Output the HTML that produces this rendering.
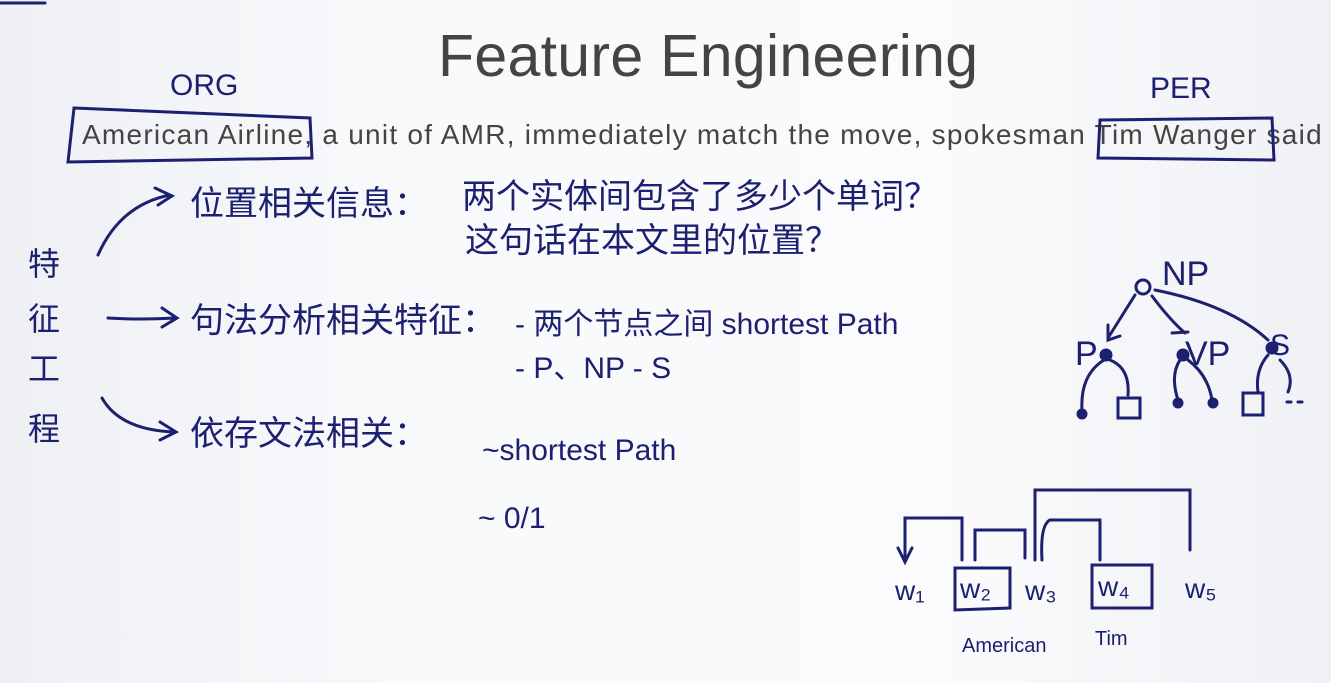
<!DOCTYPE html>
<html><head><meta charset="utf-8"><style>
html,body{margin:0;padding:0}
body{width:1331px;height:683px;overflow:hidden;background:linear-gradient(90deg,#eef0f4 0%,#f8f9fb 30%,#fbfbfd 70%,#f0f1f5 100%);position:relative;font-family:"Liberation Sans",sans-serif}
.t{position:absolute;color:#444;white-space:nowrap}
svg{position:absolute;left:0;top:0}
svg text{font-family:"Liberation Sans","Noto Sans CJK SC",sans-serif;fill:#1c2070}
</style></head><body>
<div class="t" style="left:438px;top:22px;font-size:59px;letter-spacing:0.3px">Feature Engineering</div>
<div class="t" style="left:82px;top:119px;font-size:28px;letter-spacing:1.25px">American Airline, a unit of AMR, immediately match the move, spokesman Tim Wanger said</div>
<svg width="1331" height="683" fill="none" stroke="#1c2070" stroke-width="3" stroke-linecap="round">
<path d="M0 3h45"/>
<path d="M74 108 L310 118 L312 158 L68 162 Z"/>
<path d="M1100 120 L1272 118 L1274 160 L1098 158 Z"/>
<text x="170" y="95" font-size="30" stroke="none">ORG</text>
<text x="1150" y="98" font-size="30" stroke="none">PER</text>
<path d="M98 255 Q120 205 170 195 M155 188 L172 196 L158 205"/>
<path d="M108 318 Q140 320 175 318 M162 308 L177 318 L162 327"/>
<path d="M102 398 Q120 430 175 432 M160 422 L176 432 L160 440"/>
<g stroke="none" font-size="34">
<text x="190" y="215">位置相关信息：</text>
<text x="462" y="208">两个实体间包含了多少个单词？</text>
<text x="465" y="252">这句话在本文里的位置？</text>
<text x="190" y="332">句法分析相关特征：</text>
<text x="515" y="334" font-size="30">- 两个节点之间 shortest Path</text>
<text x="515" y="378" font-size="30">- P、NP - S</text>
<text x="190" y="445">依存文法相关：</text>
<text x="482" y="460" font-size="30">~shortest Path</text>
<text x="478" y="528" font-size="30">~ 0/1</text>
<text x="28" y="275" font-size="32">特</text>
<text x="28" y="330" font-size="32">征</text>
<text x="28" y="380" font-size="32">工</text>
<text x="28" y="440" font-size="32">程</text>
<text x="1162" y="285" font-size="34">NP</text>
<text x="1075" y="365" font-size="34">P</text>
<text x="1185" y="365" font-size="34">VP</text>
<text x="1270" y="355" font-size="30">S</text>
<text x="895" y="600" font-size="28">w₁</text>
<text x="960" y="598" font-size="28">w₂</text>
<text x="1025" y="600" font-size="28">w₃</text>
<text x="1098" y="596" font-size="28">w₄</text>
<text x="1185" y="598" font-size="28">w₅</text>
<text x="962" y="652" font-size="20">American</text>
<text x="1095" y="645" font-size="20">Tim</text>
</g>
<circle cx="1143" cy="287" r="7"/>
<path d="M1135 295 L1108 338 M1108 325 L1108 340 L1120 336"/>
<path d="M1152 296 Q1170 320 1185 333 M1172 333 L1188 332"/>
<path d="M1155 290 Q1230 305 1268 340"/>
<circle cx="1106" cy="355" r="5" fill="#1c2070"/><circle cx="1183" cy="355" r="5" fill="#1c2070"/><circle cx="1272" cy="348" r="5" fill="#1c2070"/>
<path d="M1104 360 Q1080 375 1082 410 M1110 360 Q1130 368 1128 395"/>
<path d="M1180 360 Q1170 375 1178 400 M1188 360 Q1208 375 1212 400"/>
<path d="M1268 355 Q1255 370 1258 392 M1280 360 Q1295 375 1288 392"/>
<circle cx="1082" cy="414" r="4" fill="#1c2070"/><circle cx="1178" cy="403" r="4" fill="#1c2070"/><circle cx="1213" cy="403" r="4" fill="#1c2070"/>
<rect x="1118" y="398" width="22" height="20"/><rect x="1243" y="393" width="20" height="22"/>
<path d="M1287 402h4 M1298 402h4"/>
<path d="M955 568 L1010 568 L1010 608 L955 610 Z M1092 565 L1152 565 L1152 608 L1092 608 Z"/>
<path d="M905 560 V518 H962 V560 M898 548 L905 562 L912 548"/>
<path d="M975 560 V530 H1025 V558"/>
<path d="M1035 560 V490 H1190 V550"/>
<path d="M1042 560 Q1040 525 1050 520 H1100 V560"/>
</svg>
</body></html>
